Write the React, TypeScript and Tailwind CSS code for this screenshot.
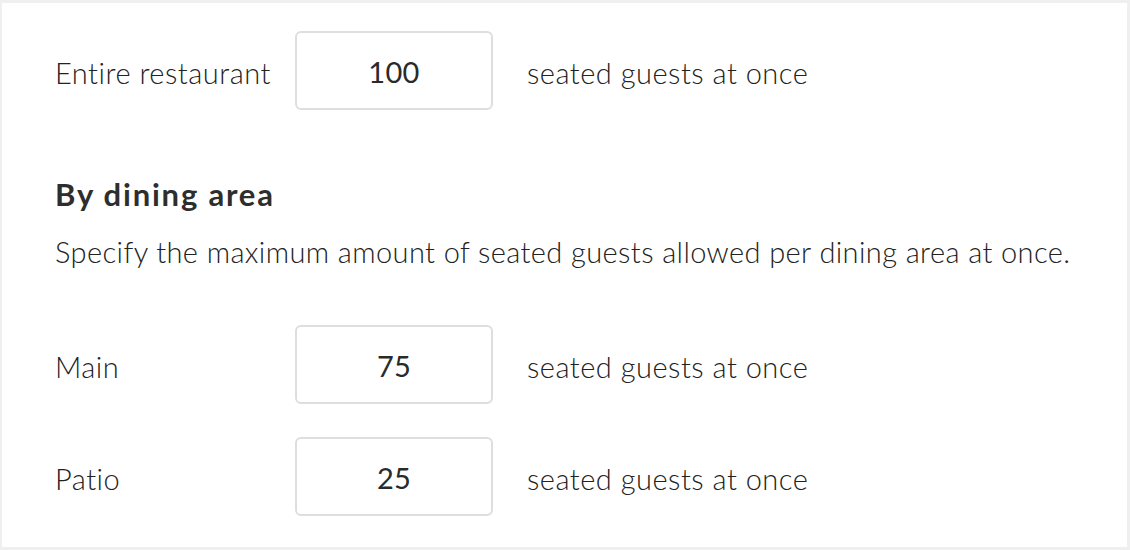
import React from 'react';

interface CapacityRowProps {
  label: string;
  value: number;
}

const CapacityRow: React.FC<CapacityRowProps> = ({ label, value }) => {
  return (
    <div className="flex items-center">
      <span className="w-[240px] pt-[4px] text-[29px] font-light leading-[36px] tracking-[0.5px] text-[#222222]">{label}</span>
      <div className="flex h-[79px] w-[198px] items-center justify-center rounded-[6px] border-2 border-[#dedede] bg-white pt-[3px] text-[29px] tracking-[0.3px] text-[#2a2a2a]">
        {value}
      </div>
      <span className="ml-[34px] pt-[4px] text-[29px] font-light leading-[36px] tracking-[0.5px] text-[#222222]">
        seated guests at once
      </span>
    </div>
  );
};

export default function App() {
  return (
    <div
      className="h-[550px] w-[1130px] bg-[#efefef] pt-[3px] pr-[3px] pb-[3px] pl-[2px]"
      style={{ fontFamily: 'Lato, "Open Sans", sans-serif' }}
    >
      <div className="h-full w-full bg-white pl-[53px] pt-[28px]">
        <CapacityRow label="Entire restaurant" value={100} />

        <h2 className="mt-[66px] text-[31px] font-bold leading-[36px] tracking-[1.8px] text-[#2e2e2e]">By dining area</h2>
        <p className="mt-[22px] text-[29px] font-light leading-[36px] tracking-[0.4px] text-[#222222]">
          Specify the maximum amount of seated guests allowed per dining area at once.
        </p>

        {/* Per-area limits */}
        <div className="mt-[55px] flex flex-col gap-[33px]">
          <CapacityRow label="Main" value={75} />
          <CapacityRow label="Patio" value={25} />
        </div>
      </div>
    </div>
  );
}
